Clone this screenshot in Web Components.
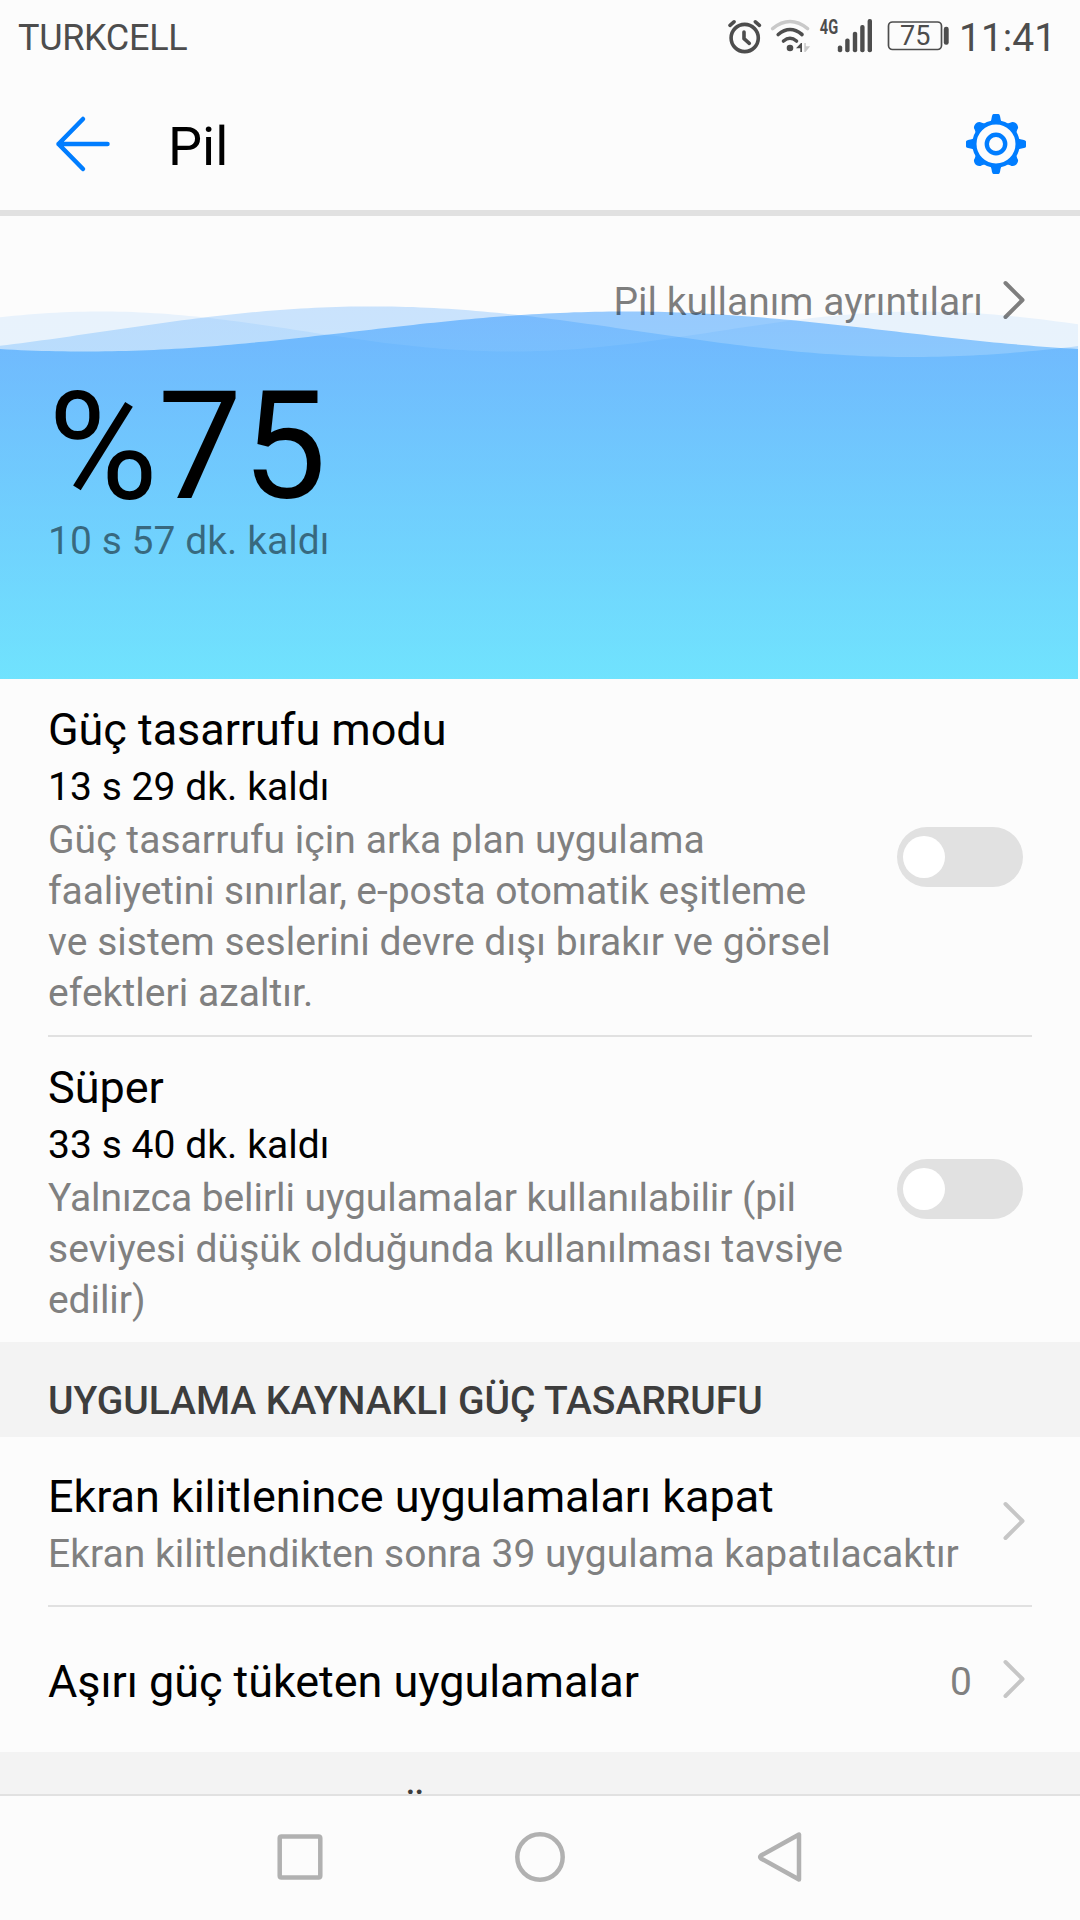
<!DOCTYPE html>
<html lang="tr">
<head>
<meta charset="utf-8">
<title>Pil</title>
<style>
html,body{margin:0;padding:0}
body{width:1080px;height:1920px;overflow:hidden;background:#fcfcfc;font-family:Roboto,"Noto Sans",sans-serif;color:#000}
</style>
</head>
<body>
<battery-screen></battery-screen>
<script>
const define = (name, html, setup) => customElements.define(name, class extends HTMLElement {
  connectedCallback() {
    if (this.shadowRoot) return;
    const root = this.attachShadow({ mode: 'open' });
    const t = document.createElement('template');
    t.innerHTML = html;
    root.append(t.content.cloneNode(true));
    if (setup) setup.call(this, root);
  }
});

define('status-bar', `
<style>
:host{display:flex;height:72px;justify-content:space-between;align-items:flex-start;color:#4d4d4d;box-sizing:border-box;padding:0 20px 0 18px}
.carrier{font-size:36px;line-height:42px;padding-top:17px;letter-spacing:-.3px}
.right{display:flex}
.clock{font-size:39px;line-height:46px;padding-top:15px;width:101px;margin-left:-1px;white-space:nowrap}
svg{display:block}
</style>
<span class="carrier">TURKCELL</span>
<div class="right">
<svg width="232" height="72" viewBox="28 0 232 72" fill="none" stroke="#4d4d4d" stroke-linecap="round" stroke-linejoin="round">
  <circle cx="44.7" cy="38" r="13.6" stroke-width="3.6"/>
  <path d="M44 32v6.7l5.3 4.6" stroke-width="3.6"/>
  <path d="M30 25.300l4-3.500M55.400 21.800l4 3.500" stroke-width="3.600"/>
  <path d="M72.600 28.600Q90 14.500 107.600 28.600" stroke="#c9c9c9" stroke-width="3.500"/>
  <path d="M78.200 34.500Q90 24.500 102 34.500" stroke-width="3.600"/>
  <path d="M83.500 41Q90 35.500 96.500 41" stroke-width="3.600"/>
  <circle cx="90" cy="48" r="3.300" fill="#4d4d4d" stroke="none"/>
  <path d="M96 48.300L101 43h1v9h-1.700v-3.700z" fill="#4d4d4d" stroke="none"/>
  <path d="M104.300 43h1.500v3.300h4.400L105.500 52h-1.200z" fill="#c9c9c9" stroke="none"/>
  <text x="119.800" y="34" font-family="Roboto,sans-serif" font-weight="700" font-size="20.500" textLength="18.300" lengthAdjust="spacingAndGlyphs" fill="#4d4d4d" stroke="none">4G</text>
  <g fill="#4d4d4d" stroke="none">
    <rect x="137.800" y="45.500" width="4.400" height="6.700" rx="2"/>
    <rect x="145.200" y="38.500" width="4.400" height="13.700" rx="2"/>
    <rect x="152.800" y="31.700" width="4.400" height="20.500" rx="2"/>
    <rect x="160.200" y="25" width="4.400" height="27.200" rx="2"/>
    <rect x="167.600" y="19" width="4.400" height="33.200" rx="2"/>
    <rect x="243.800" y="26.700" width="4.900" height="18" rx="2.200"/>
  </g>
  <rect x="188.500" y="22" width="53" height="27.500" rx="4" stroke-width="1.700"/>
  <text x="215.300" y="45" text-anchor="middle" font-family="Roboto,sans-serif" font-size="27" fill="#4d4d4d" stroke="none">75</text>
</svg>
<span class="clock">11:41</span>
</div>`);

define('title-bar', `
<style>
:host{display:flex;height:138px;box-sizing:content-box;border-bottom:6px solid #e1e1e1;align-items:flex-start}
.back{padding:43px 0 0 53px}
h1{margin:0;font-weight:400;font-size:54px;line-height:64px;padding:43px 0 0 57px;flex:1}
.gear{padding:40px 52px 0 0}
svg{display:block}
</style>
<svg class="back" width="58" height="58" viewBox="0 0 58 58" fill="none" stroke="#007dff" stroke-width="4.500" stroke-linecap="round" stroke-linejoin="round"><path d="M54.500 29H5.500M30 4L5.500 29L30 54"/></svg>
<h1><slot></slot></h1>
<svg class="gear" width="64" height="64" viewBox="-32 -32 64 64"></svg>`,
function (root) {
  const axis = 'M-5.500-22Q-4.600-24-4-28Q-3.500-30-2.500-30H2.500Q3.500-30 4-28Q4.600-24 5.500-22Z';
  const diagonal = 'M-6.500-22L-5-25Q-4.600-27-3.600-27.600Q0-30.200 3.600-27.600Q4.600-27 5-25L6.500-22Z';
  let g = '<g fill="#007dff">';
  for (let i = 0; i < 8; i++) g += `<path transform="rotate(${i * 45})" d="${i % 2 ? diagonal : axis}"/>`;
  g += '</g><g fill="none" stroke="#007dff"><circle r="21.600" stroke-width="4.200"/><circle r="9.200" stroke-width="4.400"/></g>';
  root.querySelector('.gear').innerHTML = g;
});

define('chevron-icon', `
<style>:host{display:block;width:24px;height:40px;color:#c6c6c6}svg{display:block}</style>
<svg width="24" height="40" viewBox="0 0 24 40" fill="none" stroke="currentColor" stroke-width="4" stroke-linecap="round" stroke-linejoin="round"><path d="M3.500 3L20.500 20L3.500 37"/></svg>`);

define('battery-hero', `
<style>
:host{display:grid;height:463px}
svg,.content{grid-area:1/1}
svg{display:block}
.content{position:relative;display:flex;flex-direction:column;color:rgba(0,0,0,.5)}
.details{display:flex;justify-content:flex-end;font-size:39px;line-height:51px;padding:61px 54px 0 0}
.details chevron-icon{margin:3px 0 0 19px;color:rgba(0,0,0,.5)}
.level{font-size:150px;line-height:130px;color:#000;padding:54px 0 0 48px}
.left{font-size:39px;line-height:51px;letter-spacing:.05px;padding:4px 0 0 48px}
</style>
<svg width="1080" height="463" viewBox="0 216 1080 463">
<defs><linearGradient id="water" gradientUnits="userSpaceOnUse" x1="0" y1="306" x2="0" y2="679"><stop offset="0" stop-color="#007dff"/><stop offset="1" stop-color="#00cfff"/></linearGradient></defs>
</svg>
<div class="content">
<div class="details"><slot name="details"></slot><chevron-icon></chevron-icon></div>
<div class="level"><slot name="level"></slot></div>
<div class="left"><slot name="left"></slot></div>
</div>`,
function (root) {
  const wave = (mid, amp, peak, period, opacity) => {
    let d = 'M0 679';
    for (let x = 0; x <= 1078; x += 7) d += `L${x} ${(mid - amp * Math.cos(2 * Math.PI * (x - peak) / period)).toFixed(2)}`;
    return `<path d="${d}V679Z" fill="url(#water)" opacity="${opacity}"/>`;
  };
  root.querySelector('svg').insertAdjacentHTML('beforeend',
    wave(331.5, 20, 101, 820, .08) + wave(331.7, 25.3, 372, 1080, .2) + wave(331.5, 20, 625, 1080, .4));
});

define('toggle-switch', `
<style>
:host{display:flex;width:126px;height:60px;box-sizing:border-box;border-radius:30px;background:#e1e1e1;padding:9px 6px}
i{display:block;width:42px;height:42px;border-radius:50%;background:#fff}
</style><i></i>`);

define('mode-item', `
<style>
:host{display:flex;align-items:center;padding:24px 57px 17px 48px}
.text{width:800px;font-size:39px;line-height:51px;letter-spacing:.05px}
.title{font-size:45px;line-height:54px;margin-bottom:5px;letter-spacing:-.05px}
.desc{color:#808080;margin:2px 0 -1px}
toggle-switch{margin:0 0 8px auto}
</style>
<div class="text"><div class="title"><slot name="title"></slot></div><div><slot name="time"></slot></div><div class="desc"><slot></slot></div></div>
<toggle-switch></toggle-switch>`);

define('list-divider', `<style>:host{display:block;height:2px;margin:0 48px;background:#e1e1e1}</style>`);

define('section-header', `
<style>:host{display:block;box-sizing:border-box;height:95px;padding:34px 48px 0;background:#f3f3f3;color:#3d3d3d;font-size:39px;line-height:51px;font-weight:500;letter-spacing:-.04px;overflow:hidden}</style><slot></slot>`);

define('link-item', `
<style>
:host{display:flex;align-items:center;box-sizing:border-box;padding:0 54px 0 48px}
.text{flex:1;white-space:nowrap;padding-top:6px}
:host([single]) .text{padding-top:5px}
.title{font-size:45px;line-height:54px;letter-spacing:-.05px}
.sub,.value{font-size:39px;line-height:51px;color:#808080}
.sub{margin-top:5px;margin-bottom:-1px;letter-spacing:.03px}
.value{padding-top:6px;margin-right:30px}
:host([single]) .sub{display:none}
:host([single]) chevron-icon{margin-bottom:2px}
:host(:not([single])) .value{display:none}
</style>
<div class="text"><div class="title"><slot></slot></div><div class="sub"><slot name="sub"></slot></div></div>
<div class="value"><slot name="value"></slot></div><chevron-icon></chevron-icon>`);

define('nav-bar', `
<style>
:host{display:flex;box-sizing:border-box;height:126px;border-top:2px solid #e1e1e1;justify-content:center;align-items:center;gap:184px;background:#fcfcfc;padding-bottom:2px}
svg{display:block}
</style>
<svg width="56" height="56" viewBox="-28 -28 56 56" fill="none" stroke="#b1b1b1" stroke-width="4.500"><rect x="-20.300" y="-20.500" width="40.600" height="41" rx="1.800"/></svg>
<svg width="56" height="56" viewBox="-28 -28 56 56" fill="none" stroke="#b1b1b1" stroke-width="4.500"><circle r="22.700"/></svg>
<svg width="56" height="56" viewBox="-28 -28 56 56" fill="none" stroke="#b1b1b1" stroke-width="4.500" stroke-linejoin="round"><path d="M19-22.500V22.500L-19 1.500Q-20.500 0-19-1.500Z"/></svg>`);

define('battery-screen', `
<style>
:host{display:flex;flex-direction:column;width:1080px;height:1920px;overflow:hidden}
main{height:1578px;overflow:hidden;flex:none}
.lock{height:168px}.heavy{height:145px}
.next{padding-left:402px}
.tight{letter-spacing:-.07px}
</style>
<status-bar></status-bar>
<title-bar>Pil</title-bar>
<main>
<battery-hero><span slot="details">Pil kullanım ayrıntıları</span><span slot="level">%75</span><span slot="left">10 s 57 dk. kaldı</span></battery-hero>
<mode-item><span slot="title">Güç tasarrufu modu</span><span slot="time">13 s 29 dk. kaldı</span>Güç tasarrufu için arka plan uygulama <span class="tight">faaliyetini sınırlar, e-posta otomatik eşitleme</span> ve sistem seslerini devre dışı bırakır ve görsel efektleri azaltır.</mode-item>
<list-divider></list-divider>
<mode-item><span slot="title">Süper</span><span slot="time">33 s 40 dk. kaldı</span><span class="tight">Yalnızca belirli uygulamalar kullanılabilir (pil</span> seviyesi düşük olduğunda kullanılması tavsiye <span class="tight">edilir)</span></mode-item>
<section-header>UYGULAMA KAYNAKLI GÜÇ TASARRUFU</section-header>
<link-item class="lock">Ekran kilitlenince uygulamaları kapat<span slot="sub">Ekran kilitlendikten sonra 39 uygulama kapatılacaktır</span></link-item>
<list-divider></list-divider>
<link-item class="heavy" single>Aşırı güç tüketen uygulamalar<span slot="value">0</span></link-item>
<section-header class="next">Ü</section-header>
</main>
<nav-bar></nav-bar>`);
</script>
</body>
</html>
